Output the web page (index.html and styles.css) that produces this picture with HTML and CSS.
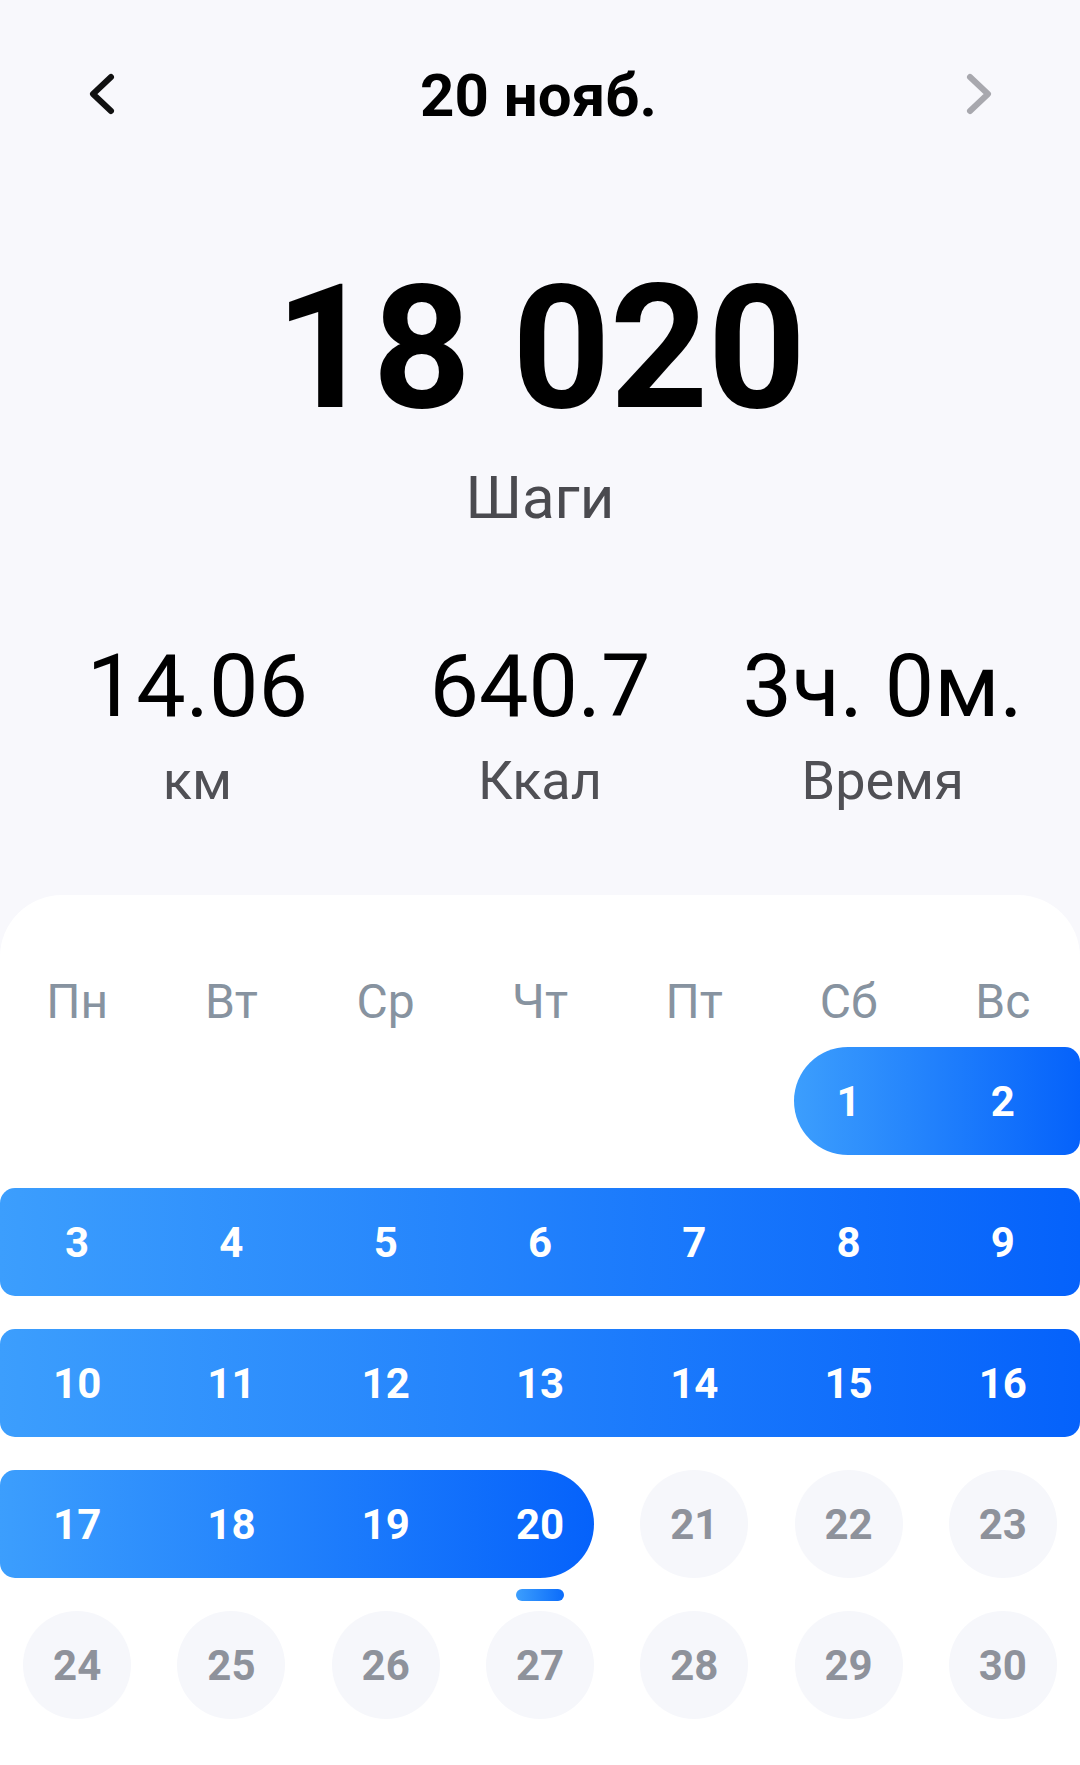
FILE: index.html
```html
<!DOCTYPE html>
<html lang="ru">
  <head>
    <meta charset="UTF-8" />
    <title>Шаги</title>

    <link rel="stylesheet" href="styles.css">
  </head>
  <body>
    <div id="page">
      <div class="header">
        <button class="nav">
          <svg width="40" height="50" viewBox="0 0 40 50">
            <path d="M30 8 L12 25 L30 42" fill="none" stroke="#111" stroke-width="6" stroke-linecap="round" stroke-linejoin="round" />
          </svg>
        </button>
        <div class="title">20 нояб.</div>
        <button class="nav">
          <svg width="40" height="50" viewBox="0 0 40 50">
            <path d="M10 8 L28 25 L10 42" fill="none" stroke="#a8a8ae" stroke-width="6" stroke-linecap="round" stroke-linejoin="round" />
          </svg>
        </button>
      </div>

      <div class="steps">
        <div class="steps-value">18 020</div>
        <div class="steps-label">Шаги</div>
      </div>

      <div class="stats">
        <div class="stat">
          <div class="stat-value">14.06</div>
          <div class="stat-label">км</div>
        </div>
        <div class="stat">
          <div class="stat-value">640.7</div>
          <div class="stat-label">Ккал</div>
        </div>
        <div class="stat">
          <div class="stat-value">3ч. 0м.</div>
          <div class="stat-label">Время</div>
        </div>
      </div>

      <div id="calendar">
        <div class="weekdays">
          <div>Пн</div><div>Вт</div><div>Ср</div><div>Чт</div><div>Пт</div><div>Сб</div><div>Вс</div>
        </div>

        <div class="week">
          <div class="track"><div class="range range-start"></div></div>
          <div class="days">
            <div></div><div></div><div></div><div></div><div></div>
            <div class="day on">1</div><div class="day on">2</div>
          </div>
        </div>

        <div class="week">
          <div class="track"><div class="range range-full"></div></div>
          <div class="days">
            <div class="day on">3</div><div class="day on">4</div><div class="day on">5</div><div class="day on">6</div>
            <div class="day on">7</div><div class="day on">8</div><div class="day on">9</div>
          </div>
        </div>

        <div class="week">
          <div class="track"><div class="range range-full"></div></div>
          <div class="days">
            <div class="day on">10</div><div class="day on">11</div><div class="day on">12</div><div class="day on">13</div>
            <div class="day on">14</div><div class="day on">15</div><div class="day on">16</div>
          </div>
        </div>

        <div class="week">
          <div class="track"><div class="range range-end"></div></div>
          <div class="days">
            <div class="day on">17</div><div class="day on">18</div><div class="day on">19</div>
            <div class="day on today">20</div>
            <div class="day off"><span>21</span></div><div class="day off"><span>22</span></div><div class="day off"><span>23</span></div>
          </div>
        </div>

        <div class="week">
          <div class="days">
            <div class="day off"><span>24</span></div><div class="day off"><span>25</span></div><div class="day off"><span>26</span></div>
            <div class="day off"><span>27</span></div><div class="day off"><span>28</span></div><div class="day off"><span>29</span></div>
            <div class="day off"><span>30</span></div>
          </div>
        </div>
      </div>
    </div>
  </body>
</html>
```

FILE: styles.css
```css
body {
  margin: 0;
  padding: 0;
  font-family: Roboto, "Liberation Sans", sans-serif;
  background-color: #f8f8fc;
}

#page {
  width: 1080px;
  height: 1765px;
  display: flex;
  flex-direction: column;
  overflow: hidden;
}

.header {
  height: 192px;
  display: flex;
  align-items: center;
  justify-content: space-between;
  padding: 0 70px 0 71px;
}

.nav {
  border: none;
  background: none;
  padding: 0;
  width: 60px;
  height: 60px;
  display: flex;
  align-items: center;
  justify-content: center;
  margin-bottom: 4px;
}

.title {
  font-size: 60px;
  font-weight: 700;
  color: #000;
  line-height: 80px;
  margin-left: -4px;
}

.steps {
  text-align: center;
  padding-top: 56px;
}

.steps-value {
  font-size: 172px;
  font-weight: 700;
  line-height: 200px;
  color: #000;
  letter-spacing: -1px;
}

.steps-label {
  font-size: 60px;
  line-height: 80px;
  color: #4a4a4f;
  margin-top: 10px;
}

.stats {
  display: grid;
  grid-template-columns: repeat(3, 1fr);
  padding: 0 26px;
  margin-top: 98px;
  text-align: center;
}

.stat-value {
  font-size: 88px;
  line-height: 100px;
  color: #000;
}

.stat-label {
  font-size: 54px;
  line-height: 70px;
  color: #505055;
  margin-top: 10px;
}

#calendar {
  flex: 1;
  margin-top: 79px;
  background-color: #fff;
  border-radius: 62px 62px 0 0;
  padding-top: 77px;
}

.weekdays {
  display: grid;
  grid-template-columns: repeat(7, 1fr);
  text-align: center;
  font-size: 48px;
  line-height: 60px;
  color: #8793a0;
  margin-bottom: 15px;
}

.week {
  display: grid;
  height: 108px;
  margin-bottom: 33px;
}

.track,
.days {
  grid-area: 1 / 1;
  display: grid;
  grid-template-columns: repeat(7, 1fr);
}

.range {
  background: linear-gradient(90deg, #3c9efd, #0562fb);
}

.range-start {
  grid-column: 6 / 8;
  margin-left: 23px;
  border-radius: 54px 15px 15px 54px;
}

.range-full {
  grid-column: 1 / 8;
  border-radius: 15px;
}

.range-end {
  grid-column: 1 / 5;
  margin-right: 23px;
  border-radius: 15px 54px 54px 15px;
}

.day {
  display: flex;
  align-items: center;
  justify-content: center;
  font-size: 42px;
  font-weight: 700;
  position: relative;
}

.day.on {
  color: #fff;
}

.day.off span {
  width: 108px;
  height: 108px;
  border-radius: 50%;
  background-color: #f6f7fb;
  color: #8e929b;
  display: flex;
  align-items: center;
  justify-content: center;
}

.today::after {
  content: "";
  position: absolute;
  left: 50%;
  top: calc(100% + 11px);
  width: 48px;
  height: 12px;
  margin-left: -24px;
  border-radius: 6px;
  background: linear-gradient(90deg, #3c9efd, #0b6cfb);
}
```
